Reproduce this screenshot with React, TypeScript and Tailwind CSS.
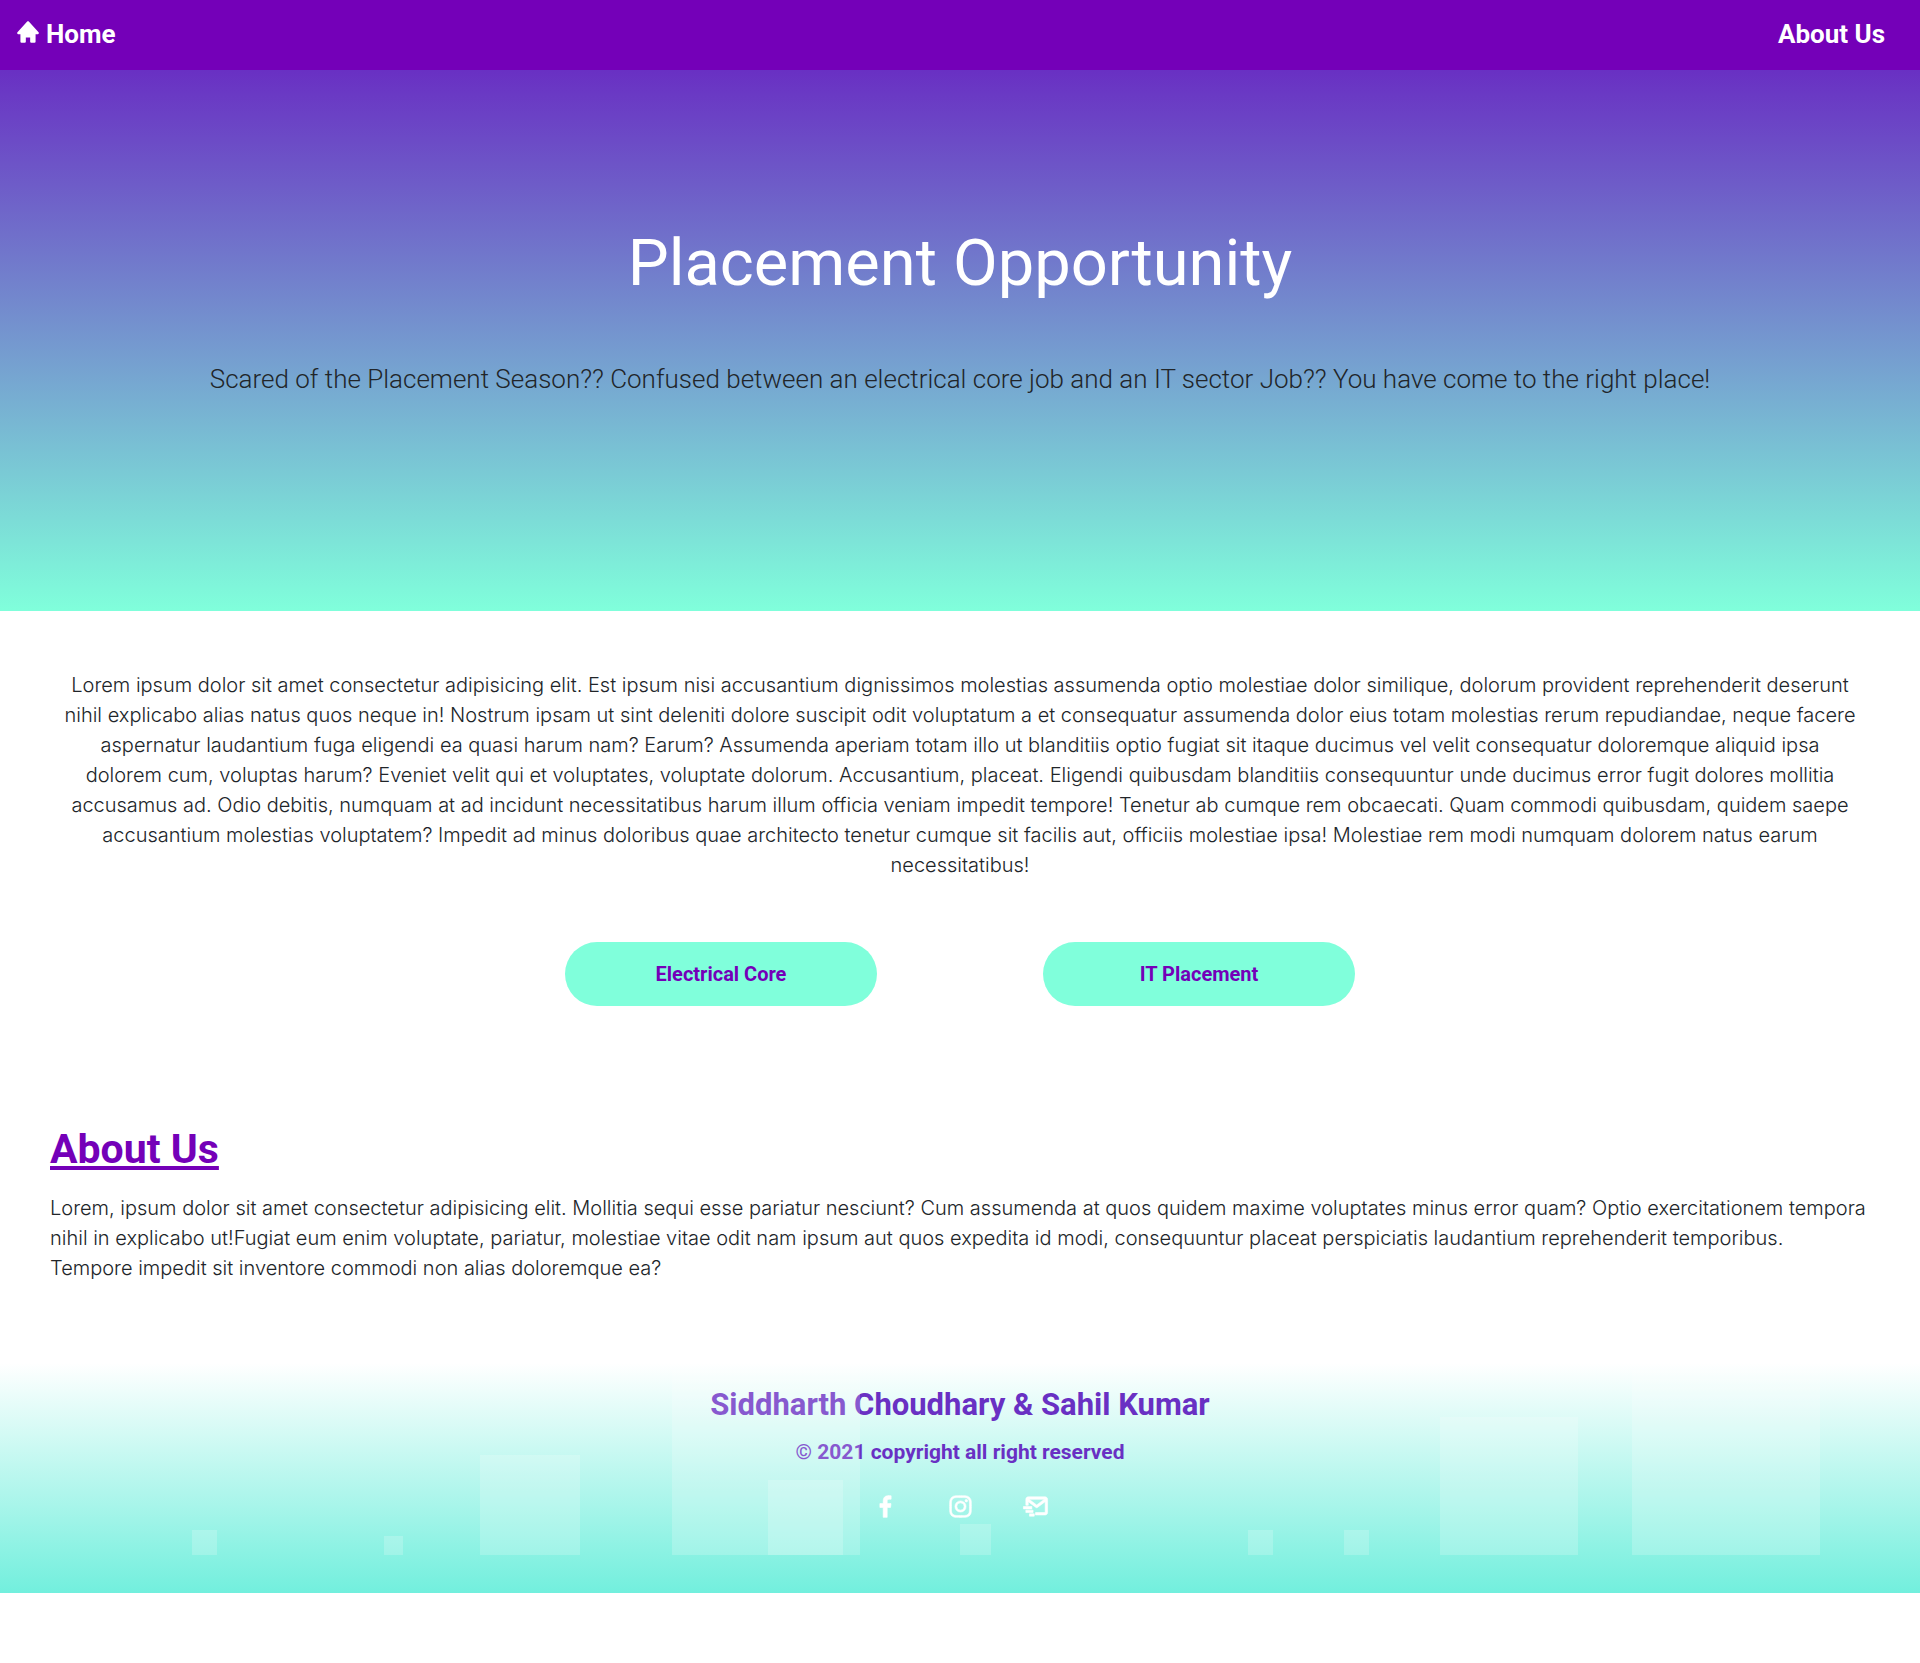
import { BiLogoFacebook, BiLogoInstagram, BiMailSend, BiSolidHome } from 'react-icons/bi';

const socials = [
  { label: 'Facebook', href: '#facebook', Icon: BiLogoFacebook },
  { label: 'Instagram', href: '#instagram', Icon: BiLogoInstagram },
  { label: 'Mail', href: '#mail', Icon: BiMailSend },
];

const squares = [
  'left-[10%] w-[25px]',
  'left-[20%] w-[19px]',
  'left-[25%] w-[100px]',
  'left-[35%] w-[188px]',
  'left-[40%] w-[75px]',
  'left-[50%] w-[31px]',
  'left-[65%] w-[25px]',
  'left-[70%] w-[25px]',
  'left-[75%] w-[138px]',
  'left-[85%] w-[188px]',
];

function Nav() {
  return (
    <nav className="flex h-[70px] items-center justify-between bg-[#7400b8] pb-0.5 pl-[15px] pr-[35px] text-[26px] font-bold leading-8 text-white">
      <a href="#home" className="flex items-center gap-[5px]">
        <BiSolidHome size={26} aria-hidden="true" className="-mt-1" />
        Home
      </a>
      <a href="#about">About Us</a>
    </nav>
  );
}

function Hero() {
  return (
    <header
      id="home"
      className="flex h-[541px] flex-col items-center bg-[linear-gradient(#6930c3,#80ffdb)] px-8 pt-[153px] text-center"
    >
      <h1 className="text-[65px] leading-20 text-white">Placement Opportunity</h1>
      <p className="mt-14 text-[26px] font-light leading-10 text-[#212529]">
        Scared of the Placement Season?? Confused between an electrical core job and an IT sector Job?? You have come
        to the right place!
      </p>
    </header>
  );
}

function Intro() {
  return (
    <section className="px-[62px] pt-[59px]">
      <p className="text-center font-['Inter',sans-serif] text-[20px] font-light leading-[30px] text-[#212529]">
        Lorem ipsum dolor sit amet consectetur adipisicing elit. Est ipsum nisi accusantium dignissimos molestias
        assumenda optio molestiae dolor similique, dolorum provident reprehenderit deserunt nihil explicabo alias natus
        quos neque in! Nostrum ipsam ut sint deleniti dolore suscipit odit voluptatum a et consequatur assumenda dolor
        eius totam molestias rerum repudiandae, neque facere aspernatur laudantium fuga eligendi ea quasi harum nam?
        Earum? Assumenda aperiam totam illo ut blanditiis optio fugiat sit itaque ducimus vel velit consequatur
        doloremque aliquid ipsa dolorem cum, voluptas harum? Eveniet velit qui et voluptates, voluptate dolorum.
        Accusantium, placeat. Eligendi quibusdam blanditiis consequuntur unde ducimus error fugit dolores mollitia
        accusamus ad. Odio debitis, numquam at ad incidunt necessitatibus harum illum officia veniam impedit tempore!
        Tenetur ab cumque rem obcaecati. Quam commodi quibusdam, quidem saepe accusantium molestias voluptatem? Impedit
        ad minus doloribus quae architecto tenetur cumque sit facilis aut, officiis molestiae ipsa! Molestiae rem modi
        numquam dolorem natus earum necessitatibus!
      </p>
      <div className="mt-[62px] flex justify-center gap-[166px] text-[20px] font-bold text-[#7400b8]">
        <button type="button" className="h-16 w-[312px] rounded-full bg-[#80ffdb]">
          Electrical Core
        </button>
        <button type="button" className="h-16 w-[312px] rounded-full bg-[#80ffdb]">
          IT Placement
        </button>
      </div>
    </section>
  );
}

function About() {
  return (
    <section id="about" className="px-[50px] pb-20 pt-[118px]">
      <h2 className="text-[41px] font-bold leading-[50px] text-[#7400b8] underline decoration-4 underline-offset-[3px] [text-decoration-skip-ink:none]">
        About Us
      </h2>
      <p className="mt-[19px] font-['Inter',sans-serif] text-[20px] font-light leading-[30px] text-[#212529]">
        Lorem, ipsum dolor sit amet consectetur adipisicing elit. Mollitia sequi esse pariatur nesciunt? Cum assumenda
        at quos quidem maxime voluptates minus error quam? Optio exercitationem tempora nihil in explicabo ut!Fugiat
        eum enim voluptate, pariatur, molestiae vitae odit nam ipsum aut quos expedita id modi, consequuntur placeat
        perspiciatis laudantium reprehenderit temporibus. Tempore impedit sit inventore commodi non alias doloremque
        ea?
      </p>
    </section>
  );
}

function Footer() {
  return (
    <footer className="relative flex h-[230px] flex-col items-center overflow-hidden bg-[linear-gradient(#ffffff,#72efdd)] pt-[22px] font-bold text-[#6930c3]">
      <h3 className="text-[31px] leading-10">Siddharth Choudhary &amp; Sahil Kumar</h3>
      <p className="mt-[11px] text-[21px] leading-8">&copy; 2021 copyright all right reserved</p>
      <div className="mt-6 flex gap-[46px] text-white">
        {socials.map(({ label, href, Icon }) => (
          <a key={label} href={href} aria-label={label}>
            <Icon size={29} stroke="currentColor" strokeWidth={0.5} />
          </a>
        ))}
      </div>
      <div aria-hidden="true" className="pointer-events-none absolute inset-0">
        {squares.map((square) => (
          <span key={square} className={`absolute bottom-[38px] aspect-square bg-white/20 ${square}`} />
        ))}
      </div>
    </footer>
  );
}

export default function App() {
  return (
    <div className="min-h-screen bg-white font-['Roboto',sans-serif]">
      <Nav />
      <main>
        <Hero />
        <Intro />
        <About />
      </main>
      <Footer />
    </div>
  );
}
